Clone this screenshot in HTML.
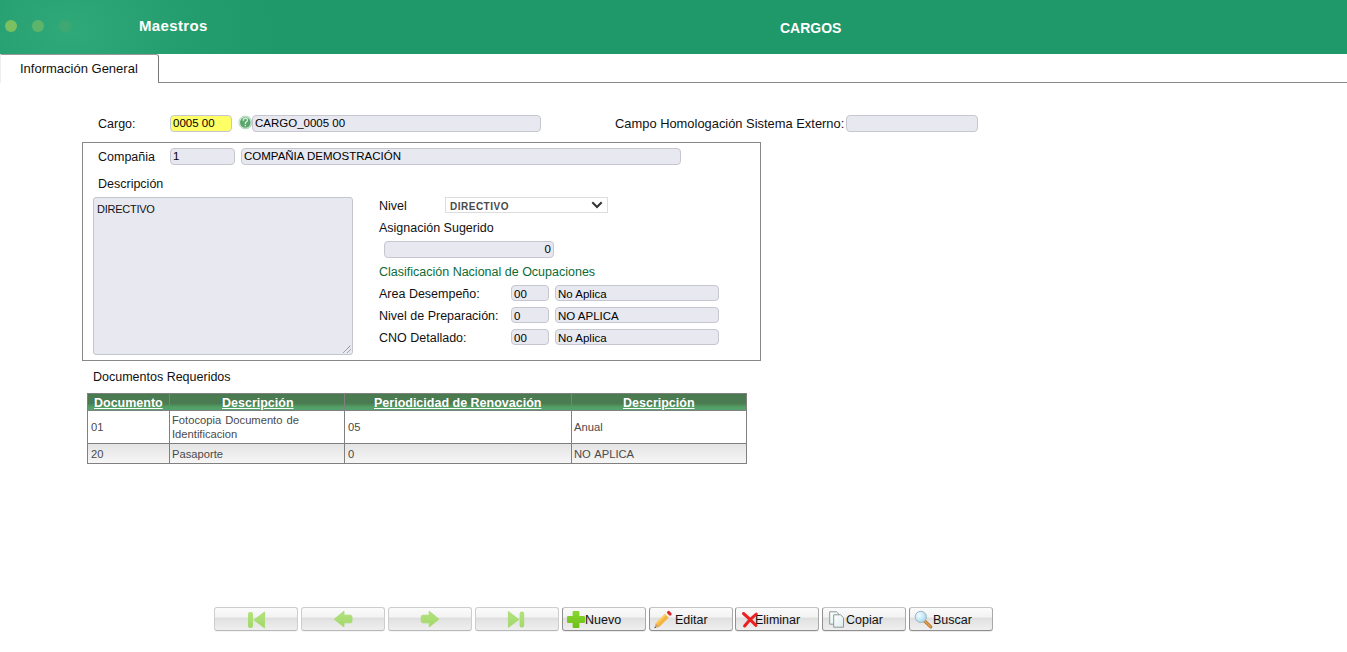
<!DOCTYPE html>
<html><head><meta charset="utf-8">
<style>
*{margin:0;padding:0;box-sizing:border-box}
html,body{width:1347px;height:652px;overflow:hidden;background:#fff;font-family:"Liberation Sans",sans-serif;color:#000}
.a{position:absolute}
.t{position:absolute;white-space:nowrap;line-height:1;font-size:12.5px;color:#111}
.hdr{left:0;top:0;width:1347px;height:54px;background:#1f986a;overflow:hidden}
.glow{left:-140px;top:-120px;width:420px;height:300px;background:radial-gradient(ellipse at center,rgba(80,200,150,0.35) 0%,rgba(60,180,130,0.18) 40%,rgba(31,152,106,0) 70%)}
.dot{width:12px;height:12px;border-radius:50%;top:20px}
.inp{position:absolute;background:#e8e8f0;border:1px solid #c6c6d0;border-radius:4px;height:17px;font-size:11.5px;line-height:15px;padding-left:2px;color:#000;white-space:nowrap;overflow:hidden}
.btn{position:absolute;top:607px;width:84px;height:24px;border:1px solid #a8a8a8;border-top-color:#c4c4c4;border-bottom-color:#8e8e8e;border-left-color:#909090;border-radius:3px;background:linear-gradient(#fbfbfb 0%,#f3f3f3 40%,#dedede 48%,#e4e4e4 58%,#efefef 100%);box-shadow:0 1px 0 rgba(0,0,0,0.08)}
.dis{border-color:#cdcdcd;border-bottom-color:#b8b8b8;box-shadow:0 1px 0 rgba(0,0,0,0.04)}
.bt{position:absolute;top:5px;font-size:12.5px;line-height:14px;color:#111;white-space:nowrap}
.th{font-size:12.5px!important;font-weight:bold;color:#fff!important;text-decoration:underline;text-underline-offset:1px}
.td{font-size:11.2px!important;color:#4a4a4a!important;word-spacing:1px}
table.g{position:absolute;left:87px;top:393px;border-collapse:collapse;font-size:11px;color:#555}
table.g td,table.g th{border:1px solid #888;padding:0 3px}
table.g th{height:17px;background:linear-gradient(#4c7a52 0%,#4f8456 50%,#5aa86c 100%);color:#fff;font-weight:bold;font-size:12px;text-decoration:underline}
</style></head><body>
<!-- header -->
<div class="a hdr">
  <div class="a glow"></div>
  <div class="a dot" style="left:5px;background:#7cc060"></div>
  <div class="a dot" style="left:32px;background:#5db56c"></div>
  <div class="a dot" style="left:59px;background:#3fa872"></div>
  <div class="t" style="left:139px;top:18px;font-size:15px;font-weight:bold;color:#fff;letter-spacing:0.35px">Maestros</div>
  <div class="t" style="left:780px;top:21px;font-size:14px;font-weight:bold;color:#fff">CARGOS</div>
</div>
<!-- tab -->
<div class="a" style="left:0;top:54px;width:159px;height:29px;border:1px solid #eee;border-top-color:#999;border-right:1px solid #777;border-bottom:none;border-radius:0 3px 0 0;background:#fff"></div>
<div class="a" style="left:158px;top:82px;width:1189px;height:1px;background:#888"></div>
<div class="t" style="left:20px;top:62px;font-size:13px">Información General</div>

<!-- cargo row -->
<div class="t" style="left:98px;top:118px">Cargo:</div>
<div class="inp" style="left:170px;top:115px;width:62px;background:#ffff66">0005 00</div>
<div class="a" style="left:239px;top:116px;width:13px;height:13px;border-radius:50%;background:radial-gradient(circle at 40% 35%,#9fd89f,#3d9a4a 70%,#2e7d3a)"></div>
<div class="inp" style="left:252px;top:115px;width:289px">CARGO_0005 00</div>
<div class="t" style="left:615px;top:118px;font-size:12.9px">Campo Homologación Sistema Externo:</div>
<div class="inp" style="left:846px;top:115px;width:132px"></div>

<!-- fieldset -->
<div class="a" style="left:82px;top:142px;width:679px;height:219px;border:1px solid #888"></div>
<div class="t" style="left:98px;top:151px">Compañia</div>
<div class="inp" style="left:170px;top:148px;width:65px">1</div>
<div class="inp" style="left:241px;top:148px;width:440px">COMPAÑIA DEMOSTRACIÓN</div>
<div class="t" style="left:98px;top:178px">Descripción</div>
<div class="a" style="left:93px;top:197px;width:260px;height:158px;background:#e8e8f0;border:1px solid #c4c4cc;border-radius:3px"></div>
<div class="t" style="left:97px;top:204px;font-size:11px;letter-spacing:-0.25px">DIRECTIVO</div>

<div class="t" style="left:379px;top:200px">Nivel</div>
<div class="a" style="left:445px;top:197px;width:163px;height:16px;border:1px solid #ddd;background:#fff"></div>
<div class="t" style="left:450px;top:202px;font-size:10px;font-weight:bold;color:#4a4a4a;letter-spacing:0.5px">DIRECTIVO</div>
<div class="t" style="left:379px;top:222px">Asignación Sugerido</div>
<div class="inp" style="left:384px;top:241px;width:170px;text-align:right;padding-right:2px">0</div>
<div class="t" style="left:379px;top:266px;color:#0d6b36">Clasificación Nacional de Ocupaciones</div>
<div class="t" style="left:379px;top:288px">Area Desempeño:</div>
<div class="inp" style="left:511px;top:285px;height:16px;width:38px;line-height:17px">00</div>
<div class="inp" style="left:555px;top:285px;height:16px;width:164px;line-height:17px">No Aplica</div>
<div class="t" style="left:379px;top:310px">Nivel de Preparación:</div>
<div class="inp" style="left:511px;top:307px;height:16px;width:38px;line-height:17px">0</div>
<div class="inp" style="left:555px;top:307px;height:16px;width:164px;line-height:17px">NO APLICA</div>
<div class="t" style="left:379px;top:332px">CNO Detallado:</div>
<div class="inp" style="left:511px;top:329px;height:16px;width:38px;line-height:17px">00</div>
<div class="inp" style="left:555px;top:329px;height:16px;width:164px;line-height:17px">No Aplica</div>

<div class="t" style="left:93px;top:371px">Documentos Requeridos</div>


<!-- table -->
<div class="a" style="left:87px;top:393px;width:660px;height:71px;border:1px solid #808080;background:#fff"></div>
<div class="a" style="left:88px;top:394px;width:658px;height:16px;background:linear-gradient(#48784c 0%,#4b7b51 15%,#4b7b51 58%,#53a066 82%,#54a36e 100%)"></div>
<div class="a" style="left:88px;top:410px;width:658px;height:1px;background:#808080"></div>
<div class="a" style="left:88px;top:443px;width:658px;height:1px;background:#808080"></div>
<div class="a" style="left:88px;top:444px;width:658px;height:19px;background:linear-gradient(#e4e4e4,#f6f6f6)"></div>
<div class="a" style="left:169px;top:394px;width:1px;height:69px;background:#808080"></div>
<div class="a" style="left:344px;top:394px;width:1px;height:69px;background:#808080"></div>
<div class="a" style="left:571px;top:394px;width:1px;height:69px;background:#808080"></div>
<div class="t th" style="left:94px;top:397px">Documento</div>
<div class="t th" style="left:222px;top:397px">Descripción</div>
<div class="t th" style="left:374px;top:397px">Periodicidad de Renovación</div>
<div class="t th" style="left:623px;top:397px">Descripción</div>
<div class="t td" style="left:91px;top:422px">01</div>
<div class="t td" style="left:172px;top:415px">Fotocopia Documento de</div>
<div class="t td" style="left:172px;top:429px">Identificacion</div>
<div class="t td" style="left:348px;top:422px">05</div>
<div class="t td" style="left:574px;top:422px">Anual</div>
<div class="t td" style="left:91px;top:449px">20</div>
<div class="t td" style="left:172px;top:449px">Pasaporte</div>
<div class="t td" style="left:348px;top:449px">0</div>
<div class="t td" style="left:574px;top:449px">NO APLICA</div>

<!-- buttons -->
<div class="btn dis" style="left:214px"></div>
<div class="btn dis" style="left:301px"></div>
<div class="btn dis" style="left:388px"></div>
<div class="btn dis" style="left:475px"></div>
<div class="btn" style="left:562px"><span class="bt" style="left:22px">Nuevo</span></div>
<div class="btn" style="left:649px"><span class="bt" style="left:25px">Editar</span></div>
<div class="btn" style="left:735px"><span class="bt" style="left:19px">Eliminar</span></div>
<div class="btn" style="left:822px"><span class="bt" style="left:23px">Copiar</span></div>
<div class="btn" style="left:909px"><span class="bt" style="left:23px">Buscar</span></div>
<!-- icons -->
<svg class="a" style="left:0;top:0" width="1347" height="652" viewBox="0 0 1347 652">
  <defs>
    <linearGradient id="gg" x1="0" y1="0" x2="0" y2="1"><stop offset="0" stop-color="#b2e27e"/><stop offset="1" stop-color="#a2d868"/></linearGradient>
    <linearGradient id="pg" x1="0" y1="0" x2="0" y2="1"><stop offset="0" stop-color="#8ad632"/><stop offset="1" stop-color="#6cc018"/></linearGradient>
    <linearGradient id="cg" x1="0" y1="0" x2="1" y2="1"><stop offset="0" stop-color="#ffffff"/><stop offset="1" stop-color="#dcecee"/></linearGradient>
    <radialGradient id="lg" cx="0.35" cy="0.35" r="0.7"><stop offset="0" stop-color="#f4fcff"/><stop offset="0.6" stop-color="#c4e8f6"/><stop offset="1" stop-color="#a8d4ea"/></radialGradient>
  </defs>
  <!-- help icon -->
  <circle cx="245.3" cy="122.4" r="6.4" fill="#e4f2e6" stroke="#b8dcc0" stroke-width="1"/>
  <circle cx="245.3" cy="122.4" r="5.3" fill="#5aa66c"/>
  <path d="M243.2 120.4 Q243.4 118.2 245.4 118.2 Q247.5 118.3 247.4 120.2 Q247.3 121.4 246 122.1 Q245.3 122.6 245.3 123.6" fill="none" stroke="#d8eedc" stroke-width="1.3" stroke-linecap="round"/>
  <circle cx="245.3" cy="125.6" r="0.8" fill="#d8eedc"/>
  <!-- select chevron -->
  <path d="M593 203 L597 207 L601 203" fill="none" stroke="#333" stroke-width="2" stroke-linecap="square"/>
  <!-- textarea resize grip -->
  <path d="M343.5 352.5 L350.5 345.5 M347.5 352.5 L350.5 349.5" stroke="#666" stroke-width="1" stroke-dasharray="1 0.6"/>
  <!-- first -->
  <rect x="248" y="612" width="5" height="16" rx="2.2" fill="url(#gg)"/>
  <path d="M254 620 L264.6 612 L264.6 628 Z" fill="url(#gg)" stroke="#a6da6c" stroke-width="0.8" stroke-linejoin="round"/>
  <!-- prev -->
  <path d="M334.2 619.2 L344 611.2 L344 615.2 L350.3 615.2 Q352 615.2 352 617 L352 621 Q352 622.8 350.3 622.8 L344 622.8 L344 627 Z" fill="url(#gg)" stroke="#a6da6c" stroke-width="0.8" stroke-linejoin="round"/>
  <!-- next -->
  <path d="M439 619.2 L429.2 611.2 L429.2 615.2 L422.9 615.2 Q421.2 615.2 421.2 617 L421.2 621 Q421.2 622.8 422.9 622.8 L429.2 622.8 L429.2 627 Z" fill="url(#gg)" stroke="#a6da6c" stroke-width="0.8" stroke-linejoin="round"/>
  <!-- last -->
  <path d="M518.8 619.5 L508.4 611.5 L508.4 627.5 Z" fill="url(#gg)" stroke="#a6da6c" stroke-width="0.8" stroke-linejoin="round"/>
  <rect x="519.6" y="611.5" width="4.6" height="16" rx="2.2" fill="url(#gg)"/>
  <!-- plus -->
  <path d="M573.6 611 L578.4 611 Q579.4 611 579.4 612 L579.4 616 L584 616 Q585 616 585 617 L585 622 Q585 623 584 623 L579.4 623 L579.4 627 Q579.4 628 578.4 628 L573.6 628 Q572.6 628 572.6 627 L572.6 623 L568 623 Q567 623 567 622 L567 617 Q567 616 568 616 L572.6 616 L572.6 612 Q572.6 611 573.6 611 Z" fill="url(#pg)"/>
  <!-- pencil -->
  <g transform="translate(663,619.6) rotate(-45)">
    <path d="M-12 0 L-7.5 -2.6 L-7.5 2.6 Z" fill="#d6a468"/>
    <path d="M-12 0 L-10.6 -0.8 L-10.6 0.8 Z" fill="#333"/>
    <rect x="-7.5" y="-2.6" width="13" height="5.2" fill="#f6b43c"/>
    <rect x="-7.5" y="-2.6" width="13" height="1.6" fill="#fbd070"/>
    <rect x="5.5" y="-2.6" width="2" height="5.2" fill="#f4f0e4"/>
    <rect x="7.5" y="-2.6" width="3" height="5.2" rx="1.4" fill="#d82828"/>
  </g>
  <!-- X -->
  <path d="M743.5 613.5 Q750 619 756 625.5 M756.3 614.2 Q749 620 744.6 626" fill="none" stroke="#ec2020" stroke-width="3" stroke-linecap="round"/>
  <!-- copy -->
  <path d="M829.7 611.8 L836.4 611.8 L839 614.4 L839 624.2 L829.7 624.2 Z" fill="url(#cg)" stroke="#8c9898" stroke-width="1"/>
  <path d="M833.7 614.8 L840.6 614.8 L843.5 617.7 L843.5 627.2 L833.7 627.2 Z" fill="url(#cg)" stroke="#8c9898" stroke-width="1"/>
  <!-- magnifier -->
  <path d="M924.6 621 L930.8 626.8" stroke="#b87a30" stroke-width="3.2" stroke-linecap="round"/>
  <path d="M924.6 621 L930.4 626.4" stroke="#e4a050" stroke-width="1.4" stroke-linecap="round"/>
  <circle cx="920.8" cy="616.9" r="5.6" fill="url(#lg)" stroke="#9cb4c8" stroke-width="1"/>
</svg>
</body></html>
